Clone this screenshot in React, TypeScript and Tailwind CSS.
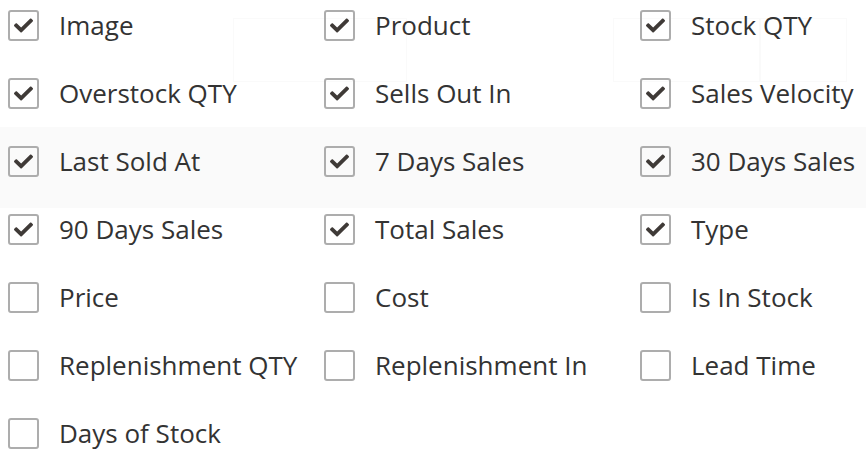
import React from 'react';

interface ColumnOption {
  label: string;
  checked: boolean;
}

const columns: ColumnOption[] = [
  { label: 'Image', checked: true },
  { label: 'Product', checked: true },
  { label: 'Stock QTY', checked: true },
  { label: 'Overstock QTY', checked: true },
  { label: 'Sells Out In', checked: true },
  { label: 'Sales Velocity', checked: true },
  { label: 'Last Sold At', checked: true },
  { label: '7 Days Sales', checked: true },
  { label: '30 Days Sales', checked: true },
  { label: '90 Days Sales', checked: true },
  { label: 'Total Sales', checked: true },
  { label: 'Type', checked: true },
  { label: 'Price', checked: false },
  { label: 'Cost', checked: false },
  { label: 'Is In Stock', checked: false },
  { label: 'Replenishment QTY', checked: false },
  { label: 'Replenishment In', checked: false },
  { label: 'Lead Time', checked: false },
  { label: 'Days of Stock', checked: false },
];

const CheckIcon = () => (
  <svg viewBox="0 0 512 512" className="w-[19px] h-[19px] fill-[#3f3a37]">
    <path d="M173.898 439.404l-166.4-166.4c-9.997-9.997-9.997-26.206 0-36.204l36.203-36.204c9.997-9.998 26.207-9.998 36.204 0L192 312.69 432.095 72.596c9.997-9.997 26.207-9.997 36.204 0l36.203 36.204c9.997 9.997 9.997 26.206 0 36.204l-294.4 294.401c-9.998 9.997-26.207 9.997-36.204-.001z" />
  </svg>
);

// faint pager / table header sitting behind the column picker
const GhostTable = () => (
  <div className="absolute inset-0 pointer-events-none" aria-hidden="true">
    <div className="flex h-[64px] mt-[18px] ml-[233px]">
      <div className="w-[174px] border border-[#fafafa]" />
      <div className="ml-auto flex">
        <div className="w-[147px] border border-[#fafafa]" />
        <div className="w-[87px] border border-[#fafafa]" />
      </div>
      <div className="w-[19px]" />
    </div>
    <div className="mt-[45px] h-[81px] bg-[#fafafa]" />
  </div>
);

export default function App() {
  return (
    <div
      className="relative w-[866px] h-[456px] overflow-hidden bg-white"
      style={{ fontFamily: '"Open Sans", "Noto Sans", sans-serif' }}
    >
      <GhostTable />
      <div className="relative grid grid-cols-[316px_316px_316px] gap-y-[37px] pt-[10px] pl-[8px]">
        {columns.map((col) => (
          <label key={col.label} className="flex items-center h-[31px] whitespace-nowrap">
            <span className="w-[31px] h-[31px] shrink-0 border-2 border-[#adadad] rounded-[3px] flex items-center justify-center">
              {col.checked && <CheckIcon />}
            </span>
            <span className="ml-[20px] pb-[1px] text-[26px] leading-none text-[#333]">{col.label}</span>
          </label>
        ))}
      </div>
    </div>
  );
}
